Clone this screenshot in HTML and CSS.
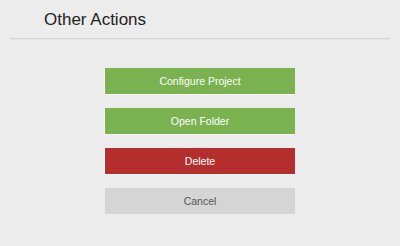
FILE: index.html
```html
<!DOCTYPE html>
<html>
<head>
<meta charset="utf-8">
<link rel="stylesheet" href="styles.css">
</head>
<body>
<div class="page">
  <div class="header"><h1 class="title">Other Actions</h1></div>
  <div class="actions">
    <button class="btn btn-green">Configure Project</button>
    <button class="btn btn-green">Open Folder</button>
    <button class="btn btn-red">Delete</button>
    <button class="btn btn-gray">Cancel</button>
  </div>
</div>
</body>
</html>
```
FILE: styles.css
```css
html, body {
  margin: 0;
  padding: 0;
  background: #ececec;
  font-family: "Liberation Sans", Arial, sans-serif;
}
.page {
  width: 400px;
  height: 246px;
}
.header {
  margin: 0 10px;
  padding: 10px 0 9px 34px;
  border-bottom: 1px solid #d6d6d6;
  box-shadow: 0 1px 0 #e4e4e4;
}
.title {
  margin: 0;
  font-size: 17px;
  font-weight: normal;
  line-height: 19px;
  color: #222;
}
.actions {
  display: flex;
  flex-direction: column;
  align-items: center;
  gap: 14px;
  padding-top: 29px;
}
.btn {
  width: 190px;
  height: 26px;
  border: none;
  margin: 0;
  padding: 0;
  font-family: "Liberation Sans", Arial, sans-serif;
  font-size: 10.5px;
  color: #fff;
  box-shadow: -1px 1px 0 rgba(255,255,255,0.8);
}
.btn-green { background: #7ab250; }
.btn-red { background: #b52e2e; }
.btn-gray { background: #d5d5d5; color: #555; box-shadow: none; }
```
